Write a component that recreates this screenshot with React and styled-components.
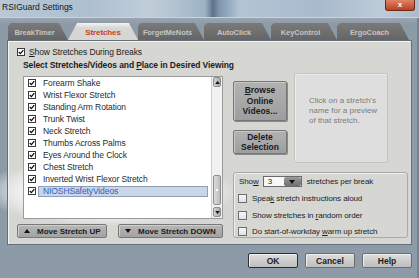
import React from 'react';
import styled, { createGlobalStyle } from 'styled-components';

const GlobalStyle = createGlobalStyle`
  html, body {
    margin: 0;
    padding: 0;
  }

  body {
    width: 419px;
    height: 278px;
    overflow: hidden;
    background: #8d9aa8;
    font-family: "Liberation Sans", Arial, sans-serif;
  }
`

const Window = styled.div`
  width: 419px;
  height: 278px;
  display: flex;
  flex-direction: column;
  overflow: hidden;
  background: #8d9aa8;
`

const TitleBar = styled.div`
  flex: none;
  height: 18px;
  box-sizing: border-box;
  display: flex;
  justify-content: space-between;
  align-items: flex-start;
  padding: 0 4px 0 2px;
  border-bottom: 1px solid #c9d3dc;
  background: linear-gradient(90deg, #b7c7d6 0, #aebfd0 90px, #c0ced9 150px, #9fb3c6 205px,
  #5d7288 213px, #7e95ab 219px, #b3c5d5 240px, #a8bacb 320px, #bccbd8 380px, #a9bccd 419px);
`

const Title = styled.div`
  padding-top: 2px;
  font-size: 8.5px;
  line-height: 11px;
  color: #101820;
`

const CloseButton = styled.div`
  width: 30px;
  height: 11px;
  box-sizing: border-box;
  display: flex;
  align-items: center;
  justify-content: center;
  border: 1px solid #6e2a18;
  border-top: none;
  border-radius: 0 0 3px 3px;
  background: linear-gradient(#e08466, #b9401f);
  color: #fff;
  font-size: 8px;
  font-weight: bold;
  line-height: 8px;
`

const Frame = styled.div`
  flex: 1;
  display: flex;
  flex-direction: column;
  padding: 5px 7px 0 7px;
  box-shadow: inset -2px 0 #75828f;
  background: radial-gradient(ellipse 128px 36px at 110px 173px, #f3f4f5 0%, #eef0f1 65%, rgba(141, 154, 168, 0) 100%),
  linear-gradient(#9aa5b0 0, #8d9aa8 6px);
`

const TabStrip = styled.div`
  flex: none;
  height: 17px;
  display: flex;
  padding-left: 1px;
`

const Tab = styled.div`
  flex: none;
  width: ${p => p.$w}px;
  height: 17px;
  box-sizing: border-box;
  display: flex;
  align-items: center;
  justify-content: center;
  padding: 2px ${p => (p.$active ? 0 : 7)}px 0 0;
  clip-path: ${p => (p.$active
    ? 'polygon(9px 0, calc(100% - 9px) 0, 100% 100%, 0 100%)'
    : 'polygon(0 3px, 3px 0, calc(100% - 9px) 0, 100% 100%, 0 100%)')};
  background: ${p => (p.$active
    ? 'linear-gradient(#f4f4f2, #d6d6d2 5px)'
    : 'linear-gradient(#7a7a7a, #656565)')};
  color: ${p => (p.$active ? '#c8401a' : '#c4c4c4')};
  font-size: ${p => (p.$active ? 8 : 7.5)}px;
  font-weight: bold;
  letter-spacing: -0.1px;
`

const Panel = styled.div`
  flex: none;
  height: 205px;
  box-sizing: border-box;
  padding: 5px 0 0 9px;
  border: 1px solid #66707a;
  box-shadow: inset 1px 1px #f4f4f2;
  background: radial-gradient(ellipse 126px 34px at 103px 151px, #fbfbfb 0%, #f6f6f5 65%, rgba(214, 214, 210, 0) 100%),
  #d6d6d2;
  color: #1c1c1c;
`

const CheckRow = styled.label`
  height: 12px;
  display: flex;
  align-items: center;
  gap: ${p => p.$gap || 4}px;
  font-size: ${p => p.$size || 8.5}px;
  letter-spacing: -0.1px;
  color: #1c1c1c;
  white-space: nowrap;
`

const Box = styled.span`
  flex: none;
  width: ${p => p.$size}px;
  height: ${p => p.$size}px;
  box-sizing: border-box;
  display: flex;
  align-items: center;
  justify-content: center;
  border: 1px solid ${p => (p.$checked ? '#3a3a3a' : '#6d6d6d')};
  background: ${p => (p.$checked ? '#fff' : 'linear-gradient(#f6f6f6, #e2e2e2)')};
`

const Check = ({checked, size = 8}) => (
    <Box $checked={checked} $size={size}>
        {checked && (
            <svg width={size - 2} height={size - 2} viewBox="0 0 6 6">
                <path d="M0.8 3 L2.4 4.6 L5.3 1.1" stroke="#111" strokeWidth="1.3" fill="none"/>
            </svg>
        )}
    </Box>
)

const SectionTitle = styled.div`
  height: 11px;
  margin-top: 2px;
  padding-left: 6px;
  font-size: 8.5px;
  line-height: 11px;
  font-weight: bold;
  letter-spacing: -0.1px;
  white-space: nowrap;
`

const Columns = styled.div`
  display: flex;
  gap: 10px;
  margin-top: 2px;
`

const LeftCol = styled.div`
  width: 206px;
  display: flex;
  flex-direction: column;
`

const ListBox = styled.div`
  width: 200px;
  height: 143px;
  margin: 3px 0 0 6px;
  box-sizing: border-box;
  display: flex;
  border: 1px solid #9a9a9a;
  background: #fff;
`

const Items = styled.div`
  flex: 1;
  padding-right: 3px;
`

const Item = styled.div`
  height: 12px;
  display: flex;
  align-items: center;
  padding-left: 4px;
`

const ItemText = styled.div`
  flex: 1;
  height: 11px;
  margin-left: 2px;
  box-sizing: border-box;
  padding-left: 4px;
  border: 1px solid ${p => (p.$selected ? '#8e9fba' : 'transparent')};
  background: ${p => (p.$selected ? '#c9d6e6' : 'transparent')};
  color: ${p => (p.$selected ? '#3c5cc8' : '#2a2a2a')};
  font-size: 8.5px;
  line-height: 9px;
  letter-spacing: -0.1px;
  white-space: nowrap;
`

const ScrollBar = styled.div`
  flex: none;
  width: 11px;
  box-sizing: border-box;
  display: flex;
  flex-direction: column;
  padding: 0 1px 1px 1px;
  border-left: 1px solid #d0d0d0;
  background: #f1f1f1;
`

const ScrollButton = styled.div`
  height: ${p => p.$h}px;
  margin-bottom: ${p => p.$mb || 0}px;
  box-sizing: border-box;
  display: flex;
  align-items: center;
  justify-content: center;
  border: 1px solid #8d8d8d;
  border-radius: 2px;
  background: ${p => (p.$thumb
    ? 'linear-gradient(90deg, #dcdcdc, #bdbdbd)'
    : 'linear-gradient(90deg, #d2d2d2, #a9a9a9)')};
`

const ScrollSpacer = styled.div`
  flex: 1;
`

const Dot = styled.span`
  width: 2px;
  height: 2px;
  background: #fff;
`

const Arrow = ({up, color = '#111', w = 6, h = 4}) => (
    <svg width={w} height={h} viewBox="0 0 6 4">
        <polygon points={up ? '0,4 6,4 3,0' : '0,0 6,0 3,4'} fill={color}/>
    </svg>
)

const MoveRow = styled.div`
  display: flex;
  gap: 11px;
  margin-top: 5px;
`

const MoveButton = styled.div`
  width: ${p => p.$w}px;
  height: 14px;
  box-sizing: border-box;
  display: flex;
  align-items: center;
  gap: 7px;
  padding-left: 6px;
  border: 1px solid #777;
  border-radius: 2px;
  background: linear-gradient(#b6b6b6, #a2a2a2);
  box-shadow: inset 1px 1px #cfcfcf;
  font-size: 8px;
  font-weight: bold;
  color: #1a1a1a;
  white-space: nowrap;
`

const RightCol = styled.div`
  width: 175px;
  display: flex;
  flex-direction: column;
`

const TopRow = styled.div`
  height: 90px;
  display: flex;
  gap: 7px;
`

const ActionCol = styled.div`
  width: 54px;
  display: flex;
  flex-direction: column;
  gap: 9px;
  padding-top: 8px;
`

const ActionButton = styled.div`
  height: ${p => p.$h}px;
  box-sizing: border-box;
  display: flex;
  flex-direction: column;
  align-items: center;
  justify-content: center;
  border: 1px solid #767676;
  border-radius: 2px;
  background: linear-gradient(#b2b2b2, #9e9e9e);
  box-shadow: inset 1px 1px #c8c8c8, 1px 1px #8a8a8a;
  font-size: 8.5px;
  line-height: 10.5px;
  font-weight: bold;
  text-align: center;
  color: #1a1a1a;
`

const Preview = styled.div`
  width: 94px;
  box-sizing: border-box;
  padding: 22px 0 0 14px;
  border: 1px solid #c4c4c4;
  border-radius: 2px;
  background: #dedede;
  box-shadow: inset 1px 1px #ececec;
  font-size: 8px;
  line-height: 10px;
  color: #7c7c7c;
  white-space: nowrap;
`

const GroupBox = styled.div`
  height: 66px;
  margin-top: 9px;
  box-sizing: border-box;
  display: flex;
  flex-direction: column;
  gap: 5px;
  padding: 3px 0 0 4px;
  border: 1px solid #a9a9a9;
  border-radius: 3px;
  box-shadow: inset 1px 1px #eeeeec;
`

const ShowRow = styled.div`
  height: 12px;
  display: flex;
  align-items: center;
  gap: 4px;
  padding-left: 1px;
  margin-bottom: 1px;
  font-size: 8px;
  letter-spacing: -0.1px;
  white-space: nowrap;
`

const Select = styled.div`
  width: 39px;
  height: 11px;
  box-sizing: border-box;
  display: flex;
  margin-right: 1px;
  border: 1px solid #6a6a6a;
  background: #f8f8f8;
`

const SelectValue = styled.div`
  flex: 1;
  padding-left: 4px;
  font-size: 8px;
  line-height: 9px;
`

const SelectArrow = styled.div`
  width: 17px;
  display: flex;
  align-items: center;
  justify-content: center;
  border-radius: 2px;
  background: linear-gradient(#9a9a9a, #6e6e6e);
`

const Footer = styled.div`
  flex: 1;
  display: flex;
  justify-content: flex-end;
  align-items: flex-start;
  gap: 7px;
  padding-top: 8px;
`

const FooterButton = styled.div`
  width: 50px;
  height: 15px;
  box-sizing: border-box;
  display: flex;
  align-items: center;
  justify-content: center;
  border: 1px solid ${p => (p.$default ? '#2e2e2e' : '#6d6d6d')};
  border-radius: 2px;
  background: linear-gradient(#dedede, #bdbdbd);
  box-shadow: inset 1px 1px #efefef;
  font-size: 8.5px;
  font-weight: bold;
  color: #222;
`

const tabs = [
    {name: 'BreakTimer', w: 60},
    {name: 'Stretches', w: 70, active: true},
    {name: 'ForgetMeNots', w: 66},
    {name: 'AutoClick', w: 67},
    {name: 'KeyControl', w: 66},
    {name: 'ErgoCoach', w: 72},
]

const stretches = [
    'Forearm Shake',
    'Wrist Flexor Stretch',
    'Standing Arm Rotation',
    'Trunk Twist',
    'Neck Stretch',
    'Thumbs Across Palms',
    'Eyes Around the Clock',
    'Chest Stretch',
    'Inverted Wrist Flexor Stretch',
    'NIOSHSafetyVideos',
]

const options = [
    <>Spea<u>k</u> stretch instructions aloud</>,
    <>Show stretches in <u>r</u>andom order</>,
    <>Do start-of-workday <u>w</u>arm up stretch</>,
]

const App = () => {
    return (
        <Window>
            <GlobalStyle/>
            <TitleBar>
                <Title>RSIGuard Settings</Title>
                <CloseButton>x</CloseButton>
            </TitleBar>
            <Frame>
                <TabStrip>
                    {tabs.map(t => <Tab key={t.name} $w={t.w} $active={t.active}>{t.name}</Tab>)}
                </TabStrip>
                <Panel>
                    <CheckRow>
                        <Check checked/>
                        <span><u>S</u>how Stretches During Breaks</span>
                    </CheckRow>
                    <SectionTitle>Select Stretches/Videos and <u>P</u>lace in Desired Viewing</SectionTitle>
                    <Columns>
                        <LeftCol>
                            <ListBox>
                                <Items>
                                    {stretches.map((s, i) => (
                                        <Item key={s}>
                                            <Check checked/>
                                            <ItemText $selected={i === stretches.length - 1}>{s}</ItemText>
                                        </Item>
                                    ))}
                                </Items>
                                <ScrollBar>
                                    <ScrollButton $h={10}><Arrow up w={5} h={3}/></ScrollButton>
                                    <ScrollSpacer/>
                                    <ScrollButton $h={30} $mb={2} $thumb><Dot/></ScrollButton>
                                    <ScrollButton $h={10}><Arrow w={5} h={3}/></ScrollButton>
                                </ScrollBar>
                            </ListBox>
                            <MoveRow>
                                <MoveButton $w={90}><Arrow up/>Move Stretch UP</MoveButton>
                                <MoveButton $w={105}><Arrow/>Move Stretch DOWN</MoveButton>
                            </MoveRow>
                        </LeftCol>
                        <RightCol>
                            <TopRow>
                                <ActionCol>
                                    <ActionButton $h={40}>
                                        <span><u>B</u>rowse</span>
                                        <span>Online</span>
                                        <span>Videos...</span>
                                    </ActionButton>
                                    <ActionButton $h={24}>
                                        <span>De<u>l</u>ete</span>
                                        <span>Selection</span>
                                    </ActionButton>
                                </ActionCol>
                                <Preview>
                                    Click on a stretch's<br/>
                                    name for a preview<br/>
                                    of that stretch.
                                </Preview>
                            </TopRow>
                            <GroupBox>
                                <ShowRow>
                                    <span>Sho<u>w</u></span>
                                    <Select>
                                        <SelectValue>3</SelectValue>
                                        <SelectArrow><Arrow w={6} h={4}/></SelectArrow>
                                    </Select>
                                    <span>stretches per break</span>
                                </ShowRow>
                                {options.map((o, i) => (
                                    <CheckRow key={i} $size={8} $gap={5}>
                                        <Check size={9}/>
                                        <span>{o}</span>
                                    </CheckRow>
                                ))}
                            </GroupBox>
                        </RightCol>
                    </Columns>
                </Panel>
                <Footer>
                    <FooterButton $default>OK</FooterButton>
                    <FooterButton>Cancel</FooterButton>
                    <FooterButton>Help</FooterButton>
                </Footer>
            </Frame>
        </Window>
    );
};

export default App;
